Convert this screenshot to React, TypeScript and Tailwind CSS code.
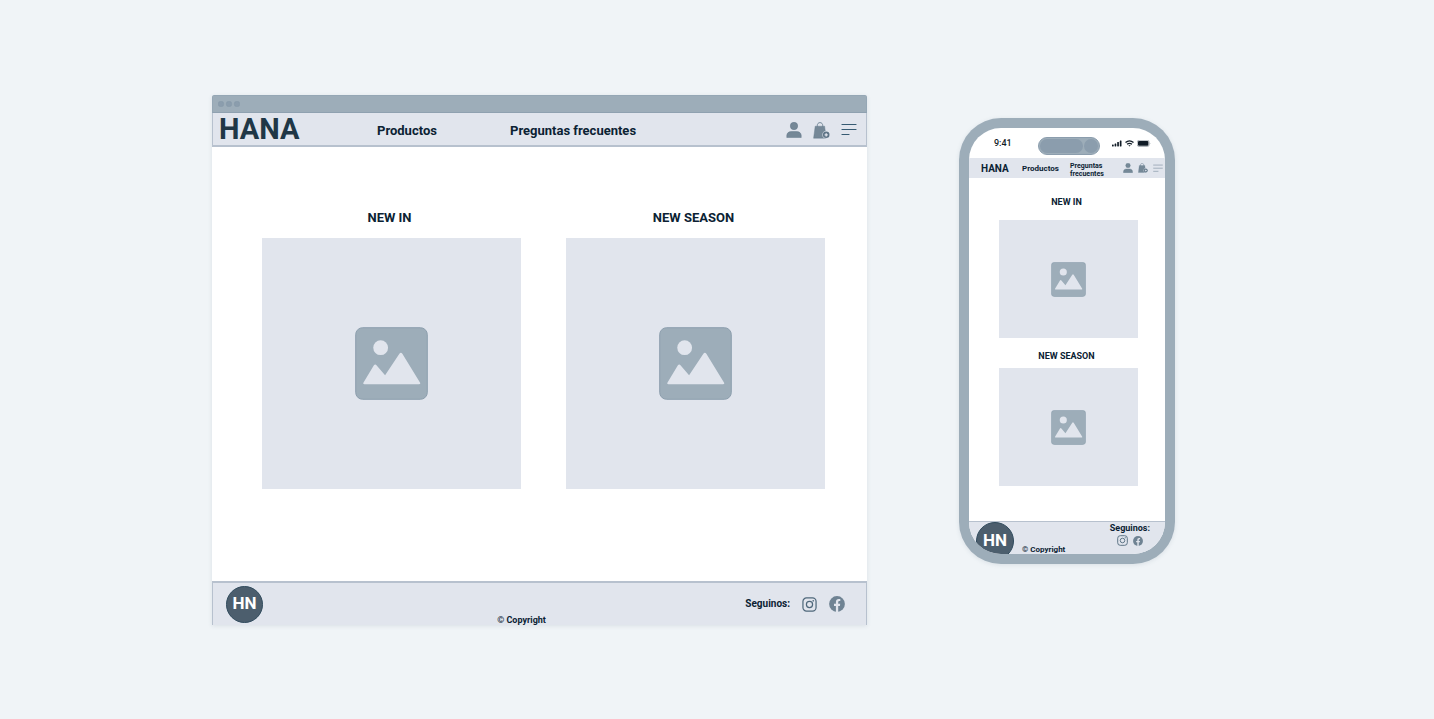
import React from "react";

type IconProps = { className?: string };

function UserIcon({ className }: IconProps) {
  return (
    <svg viewBox="0 0 16 16" className={className} aria-hidden="true">
      <circle cx="8" cy="4" r="3.7" fill="#758897" stroke="#607789" strokeWidth="0.5" />
      <path d="M.8 15.6v-2c0-2.600 2-4 4.400-4h5.600c2.400 0 4.400 1.400 4.400 4v2z" fill="#758897" stroke="#607789" strokeWidth="0.5" />
    </svg>
  );
}

function BagIcon({ className }: IconProps) {
  return (
    <svg viewBox="0 0 17 17" className={className} aria-hidden="true">
      <path d="M4.300 6V3.600C4.300 1.700 5.400.6 7 .6s2.700 1.100 2.700 3V6" fill="none" stroke="#607789" strokeWidth="0.8" />
      <path d="M2.200 4.200h9.400l1.600 12H.6z" fill="#758897" stroke="#607789" strokeWidth="0.4" />
      <circle cx="13.200" cy="12.800" r="3.800" fill="#e1e5ed" />
      <circle cx="13.200" cy="12.800" r="3.300" fill="#5f7587" />
      <path d="M13.200 11.200v3.200M11.600 12.800h3.200" stroke="#e1e5ed" strokeWidth="1.300" />
    </svg>
  );
}

function MenuIcon({ className }: IconProps) {
  return (
    <svg viewBox="0 0 16 14" className={className} fill="none" stroke="currentColor" strokeWidth="1.200" strokeLinecap="round" aria-hidden="true">
      <path d="M1 1.500h14M1 6.500h14M1 11.500h7" />
    </svg>
  );
}

function InstagramIcon({ className }: IconProps) {
  return (
    <svg viewBox="0 0 16 16" className={className} fill="none" stroke="#4f687b" strokeWidth="1.300" aria-hidden="true">
      <rect x="1" y="1" width="14" height="14" rx="3.800" />
      <circle cx="8" cy="8" r="3.300" />
      <circle cx="12" cy="4" r="0.900" fill="#4f687b" stroke="none" />
    </svg>
  );
}

function FacebookIcon({ className }: IconProps) {
  return (
    <svg viewBox="0 0 16 16" className={className} aria-hidden="true">
      <circle cx="8" cy="8" r="7.900" fill="#6f8393" />
      <path d="M6.900 15.900V10H5V7.800h1.900V6.100c0-1.900 1.100-3 2.800-3 .8 0 1.600.1 1.600.1v1.900h-.9c-.9 0-1.200.6-1.200 1.200v1.500h2L10.900 10H9.200v5.900z" fill="#e1e5ed" />
    </svg>
  );
}

function PictureIcon({ className }: IconProps) {
  return (
    <svg viewBox="0 0 74 74" className={className} aria-hidden="true">
      <rect x=".7" y=".7" width="72.600" height="72.600" rx="7" fill="#9dadb9" stroke="#8b9dad" />
      <circle cx="26" cy="21" r="7.500" fill="#e1e5ed" />
      <path d="M8.500 56.500 19 39q1.500-2 3 0l8.500 10L45 27q1.500-2 3 0l18 29.500q.8 1.500-1 1.500H9.500q-1.800 0-1-1.500z" fill="#e1e5ed" />
    </svg>
  );
}

function SignalIcon() {
  return (
    <svg viewBox="0 0 10 7" className="h-[7px] w-[10px]" fill="#111c27" aria-hidden="true">
      <rect x="0" y="4.500" width="1.700" height="2" rx=".4" />
      <rect x="2.600" y="3.500" width="1.700" height="3" rx=".4" />
      <rect x="5.200" y="2" width="1.700" height="4.500" rx=".4" />
      <rect x="7.800" y=".5" width="1.700" height="6" rx=".4" />
    </svg>
  );
}

function WifiIcon() {
  return (
    <svg viewBox="0 0 9 7" className="h-[7px] w-[9px]" fill="none" stroke="#111c27" strokeWidth="1.300" aria-hidden="true">
      <path d="M.5 2.600q4-3.400 8 0M2 4.300q2.500-2 5 0" />
      <path d="M3.300 5.200h2.400L4.500 6.600z" fill="#111c27" stroke="none" />
    </svg>
  );
}

function BatteryIcon() {
  return (
    <svg viewBox="0 0 14 7" className="h-[7px] w-[14px]" aria-hidden="true">
      <rect x=".3" y=".3" width="11.800" height="6.200" rx="1.700" fill="none" stroke="#7d8791" strokeWidth=".6" />
      <rect x="1" y="1" width="10.400" height="4.800" rx="1" fill="#111c27" />
      <path d="M12.900 2.400v2q.8-1 0-2z" fill="#7d8791" />
    </svg>
  );
}

function WindowDots() {
  return (
    <svg viewBox="0 0 22 6" className="h-[6px] w-[22px]" fill="#8b9dad" stroke="#8497a7" strokeWidth=".4" aria-hidden="true">
      <circle cx="3" cy="3" r="2.800" />
      <circle cx="11" cy="3" r="2.800" />
      <circle cx="19" cy="3" r="2.800" />
    </svg>
  );
}

function DesktopCard({ title }: { title: string }) {
  return (
    <section className="flex-1">
      <h2 className="mb-2 pr-1 text-center text-[13px] leading-6 font-bold">{title}</h2>
      <div className="flex h-[251px] items-center justify-center bg-[#e1e5ed]">
        <PictureIcon className="size-[73px]" />
      </div>
    </section>
  );
}

function PhoneCard({ title }: { title: string }) {
  return (
    <section>
      <h2 className="mb-[6px] pr-1 text-center text-[9px] leading-6 font-bold">{title}</h2>
      <div className="flex h-[118px] items-center justify-center bg-[#e1e5ed]">
        <PictureIcon className="size-[35px]" />
      </div>
    </section>
  );
}

function DesktopMockup() {
  return (
    <div className="flex min-w-0 flex-1 flex-col overflow-hidden rounded-t-[3px] bg-white shadow-[0_1px_4px_rgba(100,125,145,0.16)]">
      <div className="flex h-[18px] items-center border border-b-[#8fa1b0] border-[#95a7b5] bg-[#9dadb9] pl-[5px]">
        <WindowDots />
      </div>
      <header className="flex h-[34px] items-center border-x border-b-2 border-[#b7c1ce] bg-[#e1e5ed] pr-[9px] pl-[6px]">
        <a href="#inicio" className="w-[158px] text-[29px] leading-8 font-bold text-[#203746]">HANA</a>
        <nav className="flex flex-1 items-center pt-1 text-[13px] leading-5 font-bold">
          <a href="#productos" className="w-[133px]">Productos</a>
          <a href="#preguntas" className="whitespace-nowrap">Preguntas frecuentes</a>
        </nav>
        <div className="flex items-center gap-[11px] pt-[2px] text-[#365a72]">
          <button type="button" aria-label="Mi cuenta"><UserIcon className="size-4" /></button>
          <button type="button" aria-label="Agregar al carrito"><BagIcon className="size-[17px]" /></button>
          <button type="button" aria-label="Menú"><MenuIcon className="h-[14px] w-4" /></button>
        </div>
      </header>
      <main className="flex h-[434px] gap-[45px] pt-[59px] pr-[42px] pl-[50px]">
        <DesktopCard title="NEW IN" />
        <DesktopCard title="NEW SEASON" />
      </main>
      <footer className="flex h-[44px] border-x border-t-2 border-[#b7c1ce] bg-[#e1e5ed] pr-[21px] pl-[13px]">
        <div className="flex flex-1 items-center">
          <span className="flex size-[37px] items-center justify-center rounded-full border border-[#304b5d] bg-[#4c5e6d] text-[17px] font-bold text-white">HN</span>
        </div>
        <p className="self-end pr-7 text-[9px] leading-[10px] font-bold">© Copyright</p>
        <div className="flex flex-1 items-center justify-end">
          <span className="mr-3 text-[10px] leading-4 font-bold">Seguinos:</span>
          <a href="#instagram" aria-label="Instagram" className="mr-3"><InstagramIcon className="size-[15px]" /></a>
          <a href="#facebook" aria-label="Facebook"><FacebookIcon className="size-4" /></a>
        </div>
      </footer>
    </div>
  );
}

function PhoneMockup() {
  return (
    <div className="mt-[23px] w-[216px] shrink-0 rounded-[42px] bg-[#9dadb9] p-[10px] shadow-[0_1px_4px_rgba(100,125,145,0.16)]">
      <div className="flex flex-col overflow-hidden rounded-[32px] bg-white">
        <div className="flex h-[30px] items-center pr-[14px] pl-[25px]">
          <span className="w-11 text-[9px] leading-3 font-medium text-[#111c27]">9:41</span>
          <span className="mt-[5px] flex h-[18px] w-[62px] items-center justify-between rounded-full border border-[#8b9dad] bg-[#9dadb9] p-[1px]">
            <span className="h-[14px] w-[43px] rounded-full bg-[#8b9dad]" />
            <span className="size-[14px] rounded-full bg-[#8b9dad]" />
          </span>
          <span className="flex flex-1 items-center justify-end gap-[3px]">
            <SignalIcon />
            <WifiIcon />
            <BatteryIcon />
          </span>
        </div>
        <header className="flex h-5 items-center bg-[#e1e5ed] pr-[2px] pl-3">
          <a href="#inicio-movil" className="w-[41px] pt-[2px] text-[10px] leading-4 font-bold">HANA</a>
          <nav className="flex flex-1 items-center font-bold">
            <a href="#productos-movil" className="w-12 pt-[2px] text-[8px] leading-4">Productos</a>
            <a href="#preguntas-movil" className="w-9 pt-1 text-[7px] leading-[8px]">Preguntas frecuentes</a>
          </nav>
          <div className="flex items-center gap-[5px] text-[#8d9eac]">
            <button type="button" aria-label="Mi cuenta"><UserIcon className="size-[10px]" /></button>
            <button type="button" aria-label="Agregar al carrito"><BagIcon className="size-[10px]" /></button>
            <button type="button" aria-label="Menú"><MenuIcon className="h-[9px] w-[10px]" /></button>
          </div>
        </header>
        <main className="flex h-[343px] flex-col gap-0 pt-3 pr-[27px] pl-[30px]">
          <PhoneCard title="NEW IN" />
          <div className="pt-[6px] [&_h2]:mb-0">
            <PhoneCard title="NEW SEASON" />
          </div>
        </main>
        <footer className="flex h-[33px] items-start border-t border-[#b7c1ce] bg-[#e1e5ed] pr-[15px] pl-[7px]">
          <span className="flex size-[38px] shrink-0 items-center justify-center rounded-full border border-[#304b5d] bg-[#4c5e6d] text-[17px] font-bold text-white">HN</span>
          <p className="ml-2 flex-1 self-end text-[8px] leading-[8px] font-bold">© Copyright</p>
          <div className="flex flex-col items-center gap-[2px] pt-px">
            <span className="text-[9px] leading-[10px] font-bold">Seguinos:</span>
            <div className="flex items-center gap-[5px]">
              <a href="#instagram-movil" aria-label="Instagram"><InstagramIcon className="size-[11px]" /></a>
              <a href="#facebook-movil" aria-label="Facebook"><FacebookIcon className="size-[10px]" /></a>
            </div>
          </div>
        </footer>
      </div>
    </div>
  );
}

export default function App() {
  return (
    <div className="flex min-h-screen items-start gap-[92px] bg-[#f0f4f7] pt-[95px] pr-[259px] pb-8 pl-[212px] font-['Roboto','Liberation_Sans',sans-serif] text-[#0b2233] [&_a]:block [&_button]:block">
      <DesktopMockup />
      <PhoneMockup />
    </div>
  );
}
